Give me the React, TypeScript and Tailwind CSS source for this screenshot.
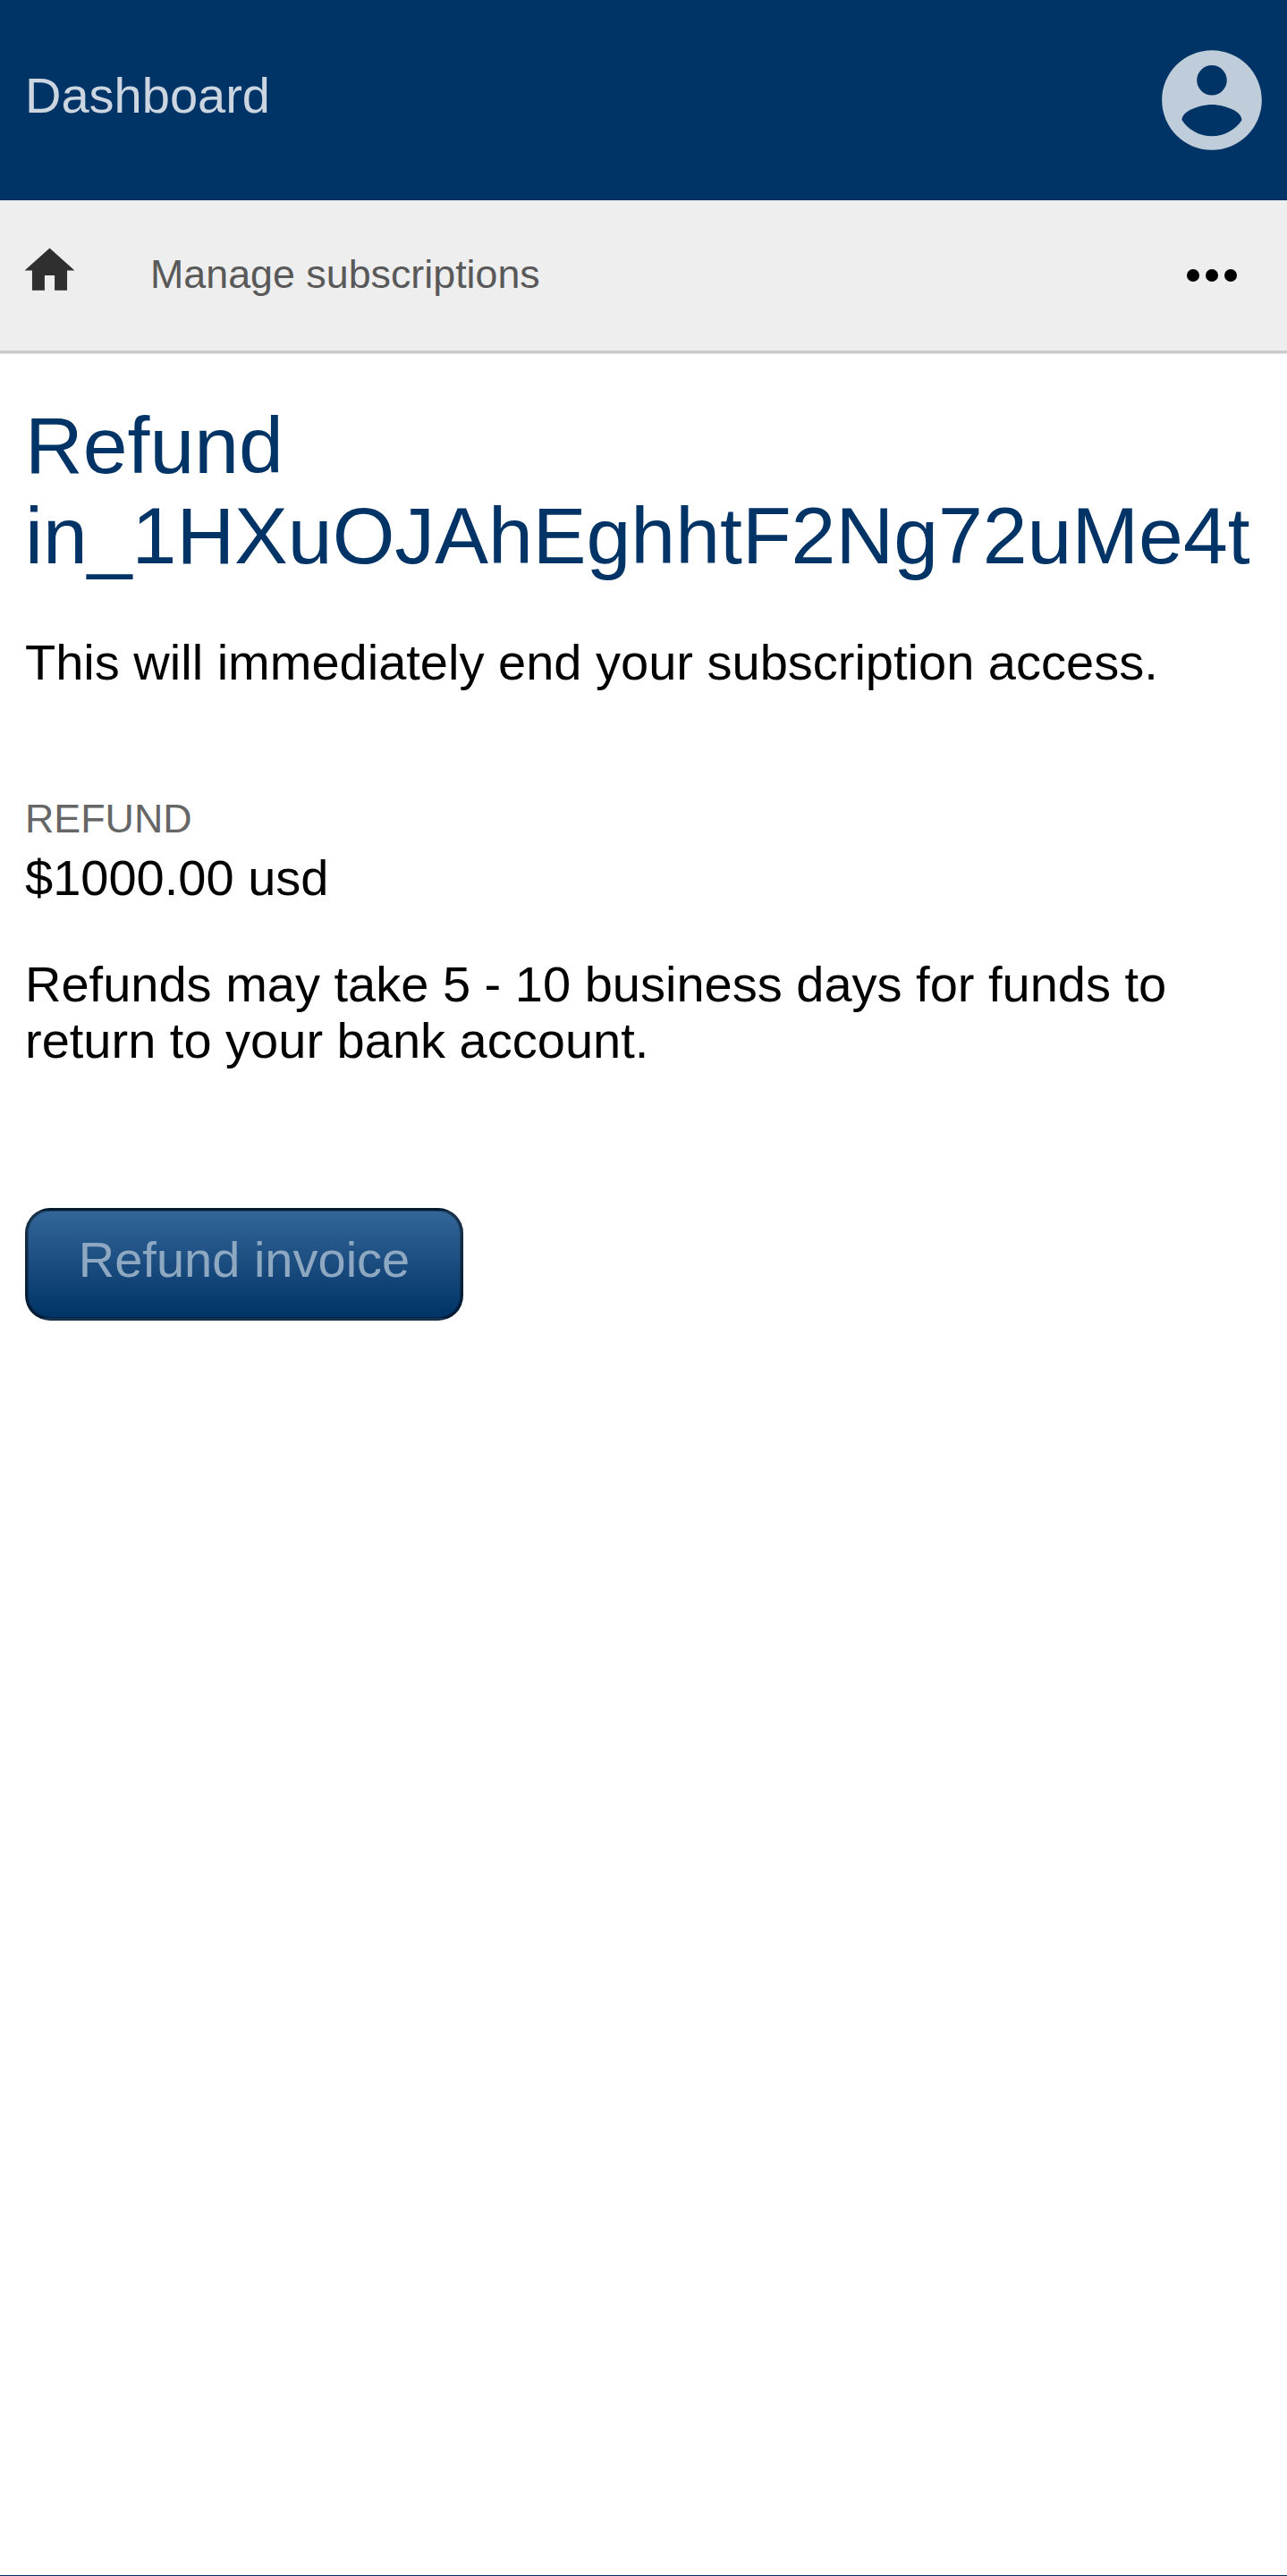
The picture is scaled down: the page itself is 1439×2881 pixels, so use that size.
export default function App() {
  return (
    <div className="flex h-[2881px] w-full flex-col overflow-hidden border-b border-[#003366] bg-white font-['Liberation_Sans',Arial,sans-serif] text-[56px] leading-[64px] text-black">
      <header className="flex h-[224px] shrink-0 items-center justify-between bg-[#003366] px-7 shadow-[inset_0_-1px_0_#002a5c]">
        <span className="-mt-[10px] text-[#ccd6e0]">Dashboard</span>
        <svg className="-mr-[11px] size-[134px] fill-[#bfccd9]" viewBox="0 0 24 24">
          <path d="M12 2C6.48 2 2 6.48 2 12s4.48 10 10 10 10-4.48 10-10S17.52 2 12 2zm0 3c1.660 0 3 1.340 3 3s-1.340 3-3 3-3-1.340-3-3 1.340-3 3-3zm0 14.200c-2.500 0-4.710-1.280-6-3.220.030-1.990 4-3.080 6-3.080 1.990 0 5.970 1.090 6 3.080-1.290 1.940-3.500 3.220-6 3.220z" />
        </svg>
      </header>
      <nav className="flex h-[171px] shrink-0 items-center border-b-3 border-[#ccc] bg-[#eeeeee] pr-[42px] pl-[22px] shadow-[0_1px_0_#e5e5e5]">
        <svg className="-mt-3 size-[67px] fill-[#2f2f2f]" viewBox="0 0 24 24">
          <path d="M10 20v-6h4v6h5v-8h3L12 3 2 12h3v8z" />
        </svg>
        <span className="-mt-1 ml-[79px] text-[44.8px] text-[#595959]">Manage subscriptions</span>
        <svg className="ml-auto size-[84px]" viewBox="0 0 24 24">
          <circle cx="6" cy="12" r="2" />
          <circle cx="12" cy="12" r="2" />
          <circle cx="18" cy="12" r="2" />
        </svg>
      </nav>
      <main className="px-7 pt-[53px]">
        <h1 className="text-[89.6px] leading-[101px] text-[#003366]">Refund<br />in_1HXuOJAhEghhtF2Ng72uMe4t</h1>
        <p className="mt-[59px]">This will immediately end your subscription access.</p>
        <dl className="mt-[116px]">
          <dt className="text-[44.8px] leading-[52px] text-[#666]">REFUND</dt>
          <dd className="mt-[9px]">$1000.00 usd</dd>
        </dl>
        <p className="mt-[55px] leading-[63px]">Refunds may take 5 - 10 business days for funds to<br />return to your bank account.</p>
        <button className="mt-[156px] block h-[126px] w-[490px] rounded-[28px] border-3 border-black/50 bg-linear-to-b from-[#336699] to-[#003366] pb-[10px] text-[#8fa8c1] shadow-[inset_0_0_0_1px_rgba(0,0,0,0.25)]">Refund invoice</button>
      </main>
    </div>
  );
}
